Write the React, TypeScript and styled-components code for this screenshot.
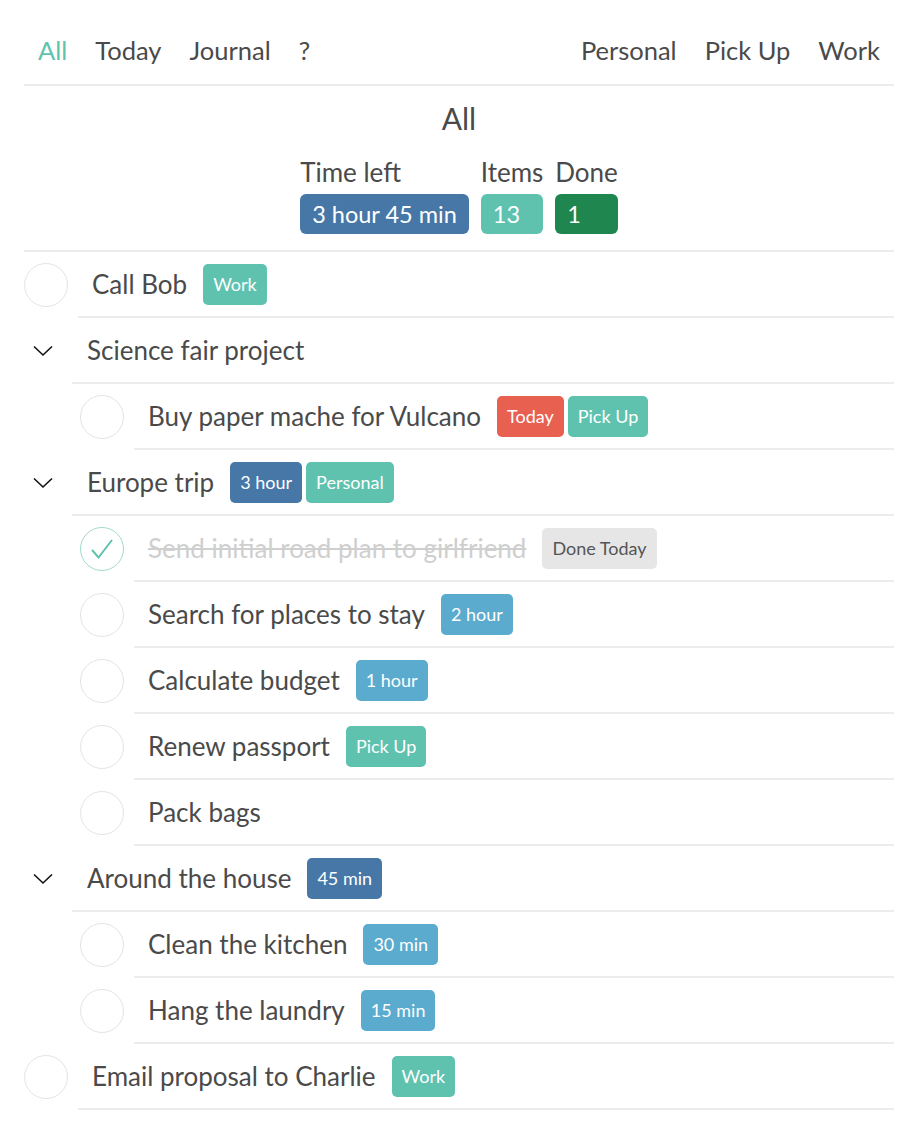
import React from 'react';
import styled, { createGlobalStyle } from 'styled-components';

const GlobalStyle = createGlobalStyle`
  html, body {
    margin: 0;
    padding: 0;
    background: #fff;
  }
  body {
    font-family: Lato, "Open Sans", sans-serif;
    color: #4a4a4a;
  }
`;

const COLORS: Record<string, string> = {
  teal: '#5ec2af',
  red: '#e8604f',
  navy: '#4677a7',
  sky: '#5babce',
  green: '#208650',
  gray: '#e6e6e6',
};

const Page = styled.div`
  padding: 0 26px 0 24px;
`;

const Nav = styled.nav`
  display: flex;
  justify-content: space-between;
  padding: 30px 0 14px;
  border-bottom: 2px solid #ececec;
`;

const NavGroup = styled.div`
  display: flex;
`;

const NavItem = styled.a<{ $active?: boolean }>`
  font-size: 25.5px;
  line-height: 40px;
  padding: 0 14px;
  color: ${(p) => (p.$active ? '#5ec2af' : '#4a4a4a')};
  cursor: pointer;
`;

const Summary = styled.section`
  display: flex;
  flex-direction: column;
  align-items: center;
  padding: 14px 0 16px;
  border-bottom: 2px solid #ececec;
`;

const Title = styled.h1`
  margin: 0;
  font-size: 30px;
  font-weight: 400;
  line-height: 36px;
`;

const Stats = styled.div`
  display: flex;
  gap: 12px;
  margin-top: 20px;
`;

const Stat = styled.div`
  display: flex;
  flex-direction: column;
  align-items: stretch;
`;

const StatLabel = styled.span`
  font-size: 26px;
  line-height: 32px;
  margin-bottom: 6px;
`;

const StatBadge = styled.span<{ $color: string }>`
  background: ${(p) => COLORS[p.$color]};
  color: #fff;
  font-size: 23.5px;
  line-height: 40px;
  padding: 0 12px;
  border-radius: 6px;
`;

const Row = styled.div<{ $indent: number }>`
  display: flex;
  align-items: center;
  padding-left: ${(p) => p.$indent}px;
`;

const Circle = styled.div<{ $done?: boolean }>`
  box-sizing: border-box;
  flex: none;
  width: 44px;
  height: 44px;
  border-radius: 50%;
  border: 1.5px solid ${(p) => (p.$done ? '#a3dacd' : '#e4e4e4')};
  margin-right: 10px;
  display: flex;
  align-items: center;
  justify-content: center;
`;

const Toggle = styled.div`
  flex: none;
  width: 48px;
  height: 66px;
  display: flex;
  align-items: center;
  justify-content: flex-start;
  padding-left: 9px;
  box-sizing: border-box;
`;

const Content = styled.div<{ $pad: number }>`
  flex: 1;
  display: flex;
  align-items: center;
  height: 64px;
  padding-left: ${(p) => p.$pad}px;
  border-bottom: 2px solid #ececec;
`;

const Label = styled.span<{ $done?: boolean }>`
  font-size: 26px;
  margin-right: 16px;
  color: ${(p) => (p.$done ? '#cfcfcf' : '#4a4a4a')};
  text-decoration: ${(p) => (p.$done ? 'line-through' : 'none')};
  text-decoration-thickness: 1.5px;
`;

const Tags = styled.div`
  display: flex;
  gap: 4px;
`;

const Tag = styled.span<{ $color: string }>`
  background: ${(p) => COLORS[p.$color]};
  color: ${(p) => (p.$color === 'gray' ? '#555' : '#fff')};
  font-size: 18px;
  line-height: 41px;
  padding: 0 10px;
  border-radius: 5px;
`;

type TagDef = [string, string];

interface Item {
  kind: 'task' | 'group';
  text: string;
  level: number;
  done?: boolean;
  tags?: TagDef[];
}

const items: Item[] = [
  { kind: 'task', text: 'Call Bob', level: 0, tags: [['Work', 'teal']] },
  { kind: 'group', text: 'Science fair project', level: 0 },
  {
    kind: 'task',
    text: 'Buy paper mache for Vulcano',
    level: 1,
    tags: [
      ['Today', 'red'],
      ['Pick Up', 'teal'],
    ],
  },
  {
    kind: 'group',
    text: 'Europe trip',
    level: 0,
    tags: [
      ['3 hour', 'navy'],
      ['Personal', 'teal'],
    ],
  },
  {
    kind: 'task',
    text: 'Send initial road plan to girlfriend',
    level: 1,
    done: true,
    tags: [['Done Today', 'gray']],
  },
  { kind: 'task', text: 'Search for places to stay', level: 1, tags: [['2 hour', 'sky']] },
  { kind: 'task', text: 'Calculate budget', level: 1, tags: [['1 hour', 'sky']] },
  { kind: 'task', text: 'Renew passport', level: 1, tags: [['Pick Up', 'teal']] },
  { kind: 'task', text: 'Pack bags', level: 1 },
  { kind: 'group', text: 'Around the house', level: 0, tags: [['45 min', 'navy']] },
  { kind: 'task', text: 'Clean the kitchen', level: 1, tags: [['30 min', 'sky']] },
  { kind: 'task', text: 'Hang the laundry', level: 1, tags: [['15 min', 'sky']] },
  { kind: 'task', text: 'Email proposal to Charlie', level: 0, tags: [['Work', 'teal']] },
];

const Chevron = () => (
  <svg width="20" height="12" viewBox="0 0 20 12" fill="none">
    <polyline points="1,1.5 10,10 19,1.5" stroke="#111" strokeWidth="1.6" />
  </svg>
);

const Check = () => (
  <svg width="26" height="24" viewBox="0 0 26 24" fill="none">
    <polyline points="3,13 9.5,20.5 23,3" stroke="#5ec2af" strokeWidth="2" />
  </svg>
);

const ListRow: React.FC<{ item: Item }> = ({ item }) => (
  <Row $indent={item.level * 56}>
    {item.kind === 'group' ? (
      <Toggle>
        <Chevron />
      </Toggle>
    ) : (
      <Circle $done={item.done}>{item.done && <Check />}</Circle>
    )}
    <Content $pad={item.kind === 'group' ? 15 : 14}>
      <Label $done={item.done}>{item.text}</Label>
      {item.tags && (
        <Tags>
          {item.tags.map(([t, c]) => (
            <Tag key={t} $color={c}>
              {t}
            </Tag>
          ))}
        </Tags>
      )}
    </Content>
  </Row>
);

export default function App() {
  return (
    <Page>
      <GlobalStyle />
      <Nav>
        <NavGroup>
          <NavItem $active>All</NavItem>
          <NavItem>Today</NavItem>
          <NavItem>Journal</NavItem>
          <NavItem>?</NavItem>
        </NavGroup>
        <NavGroup>
          <NavItem>Personal</NavItem>
          <NavItem>Pick Up</NavItem>
          <NavItem>Work</NavItem>
        </NavGroup>
      </Nav>
      <Summary>
        <Title>All</Title>
        <Stats>
          <Stat>
            <StatLabel>Time left</StatLabel>
            <StatBadge $color="navy">3 hour 45 min</StatBadge>
          </Stat>
          <Stat>
            <StatLabel>Items</StatLabel>
            <StatBadge $color="teal">13</StatBadge>
          </Stat>
          <Stat>
            <StatLabel>Done</StatLabel>
            <StatBadge $color="green">1</StatBadge>
          </Stat>
        </Stats>
      </Summary>
      {items.map((it) => (
        <ListRow key={it.text} item={it} />
      ))}
    </Page>
  );
}
